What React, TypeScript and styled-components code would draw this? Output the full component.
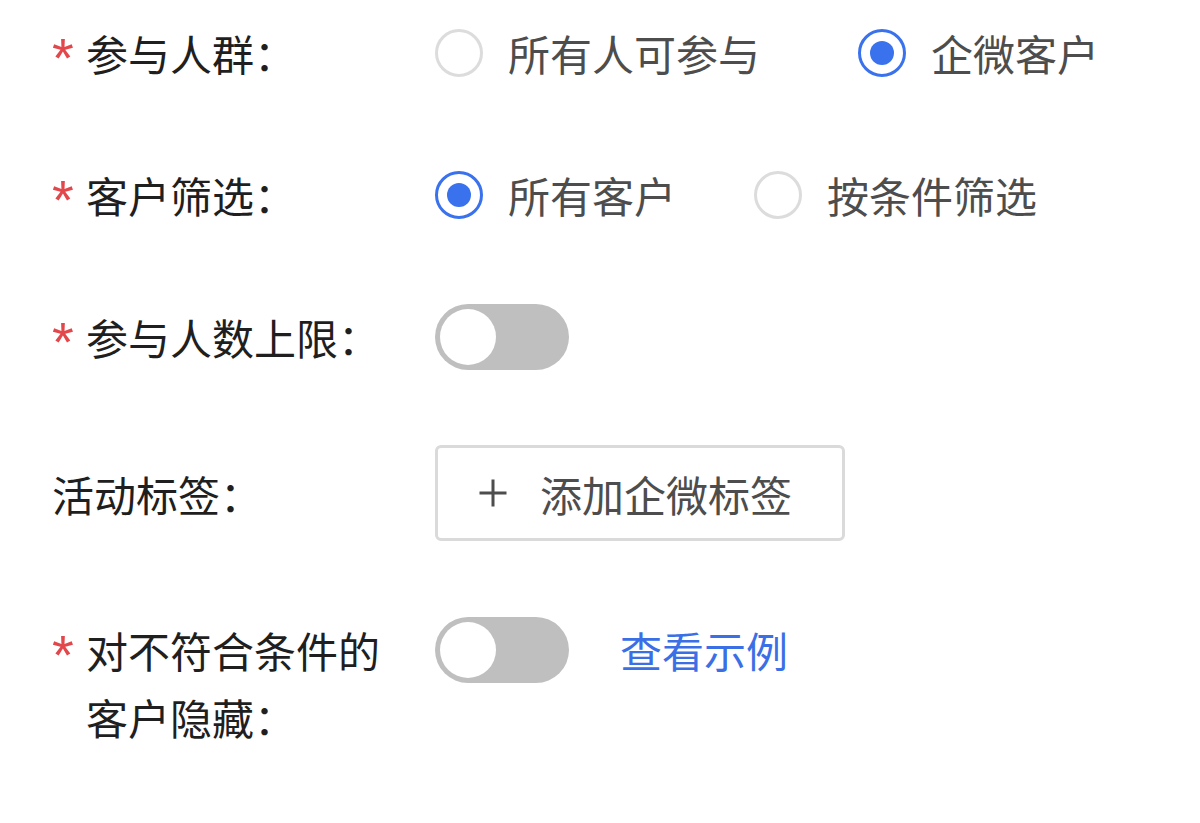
import React from "react";
import styled, { createGlobalStyle } from "styled-components";

const Global = createGlobalStyle`
  html, body { margin: 0; padding: 0; background: #ffffff; }
  body { font-family: "Noto Sans CJK SC", "Noto Sans", sans-serif; }
`;

const Form = styled.div`
  display: flex;
  flex-direction: column;
  gap: 75px;
  padding: 19px 0 0 52px;
`;

const Row = styled.div<{ $align?: "center" | "flex-start" }>`
  display: flex;
  align-items: ${(p) => p.$align ?? "center"};
`;

const Label = styled.div`
  display: flex;
  align-items: flex-start;
  width: 350px;
  margin-right: 33px;
  font-size: 42px;
  line-height: 67px;
  color: #1f1f1f;
  flex-shrink: 0;
`;

const Star = styled.span`
  box-sizing: border-box;
  width: 34px;
  height: 67px;
  flex-shrink: 0;
  color: #e2474b;
  font-family: "Liberation Sans", Arial, sans-serif;
  font-size: 56px;
  line-height: 56px;
  padding-top: 11px;
`;

const LabelText = styled.span`
  flex: 1;
`;

const Control = styled.div<{ $gap?: number }>`
  display: flex;
  align-items: center;
  gap: ${(p) => p.$gap ?? 0}px;
  min-height: 67px;
`;

const Option = styled.label`
  display: flex;
  align-items: center;
  gap: 25px;
  font-size: 42px;
  line-height: 67px;
  color: #4d4d4d;
`;

const RadioCircle = styled.span<{ $checked?: boolean }>`
  box-sizing: border-box;
  width: 48px;
  height: 48px;
  border-radius: 50%;
  border: 3px solid ${(p) => (p.$checked ? "#3a72ee" : "#dcdcdc")};
  display: flex;
  align-items: center;
  justify-content: center;
  &::after {
    content: "";
    display: ${(p) => (p.$checked ? "block" : "none")};
    width: 24px;
    height: 24px;
    border-radius: 50%;
    background: #3a72ee;
  }
`;

const Toggle = styled.span`
  box-sizing: border-box;
  width: 134px;
  height: 66px;
  border-radius: 33px;
  background: #bfbfbf;
  padding: 5px;
  display: flex;
  &::before {
    content: "";
    width: 56px;
    height: 56px;
    border-radius: 50%;
    background: #ffffff;
  }
`;

const AddButton = styled.button`
  box-sizing: border-box;
  width: 410px;
  height: 96px;
  border: 3px solid #dadada;
  border-radius: 6px;
  background: #ffffff;
  display: flex;
  align-items: center;
  padding: 0 0 0 40px;
  gap: 32px;
  font-family: inherit;
  font-size: 42px;
  color: #4d4d4d;
`;

const Link = styled.a`
  margin-left: 51px;
  font-size: 42px;
  line-height: 67px;
  color: #3a6fe6;
  text-decoration: none;
`;

const Plus = () => (
  <svg width="30" height="30" viewBox="0 0 30 30">
    <path d="M15 1.5V28.5M1.5 15H28.5" stroke="#4d4d4d" strokeWidth="3" fill="none" />
  </svg>
);

const Radio = ({ checked, children }: { checked?: boolean; children: React.ReactNode }) => (
  <Option>
    <RadioCircle $checked={checked} />
    <span>{children}</span>
  </Option>
);

export default function App() {
  return (
    <>
      <Global />
      <Form>
        <Row>
          <Label>
            <Star>*</Star>
            <LabelText>参与人群：</LabelText>
          </Label>
          <Control $gap={98}>
            <Radio>所有人可参与</Radio>
            <Radio checked>企微客户</Radio>
          </Control>
        </Row>
        <Row>
          <Label>
            <Star>*</Star>
            <LabelText>客户筛选：</LabelText>
          </Label>
          <Control $gap={78}>
            <Radio checked>所有客户</Radio>
            <Radio>按条件筛选</Radio>
          </Control>
        </Row>
        <Row>
          <Label>
            <Star>*</Star>
            <LabelText>参与人数上限：</LabelText>
          </Label>
          <Control>
            <Toggle />
          </Control>
        </Row>
        <Row>
          <Label>
            <LabelText>活动标签：</LabelText>
          </Label>
          <Control>
            <AddButton>
              <Plus />
              <span>添加企微标签</span>
            </AddButton>
          </Control>
        </Row>
        <Row $align="flex-start">
          <Label>
            <Star>*</Star>
            <LabelText>对不符合条件的客户隐藏：</LabelText>
          </Label>
          <Control>
            <Toggle />
            <Link>查看示例</Link>
          </Control>
        </Row>
      </Form>
    </>
  );
}
